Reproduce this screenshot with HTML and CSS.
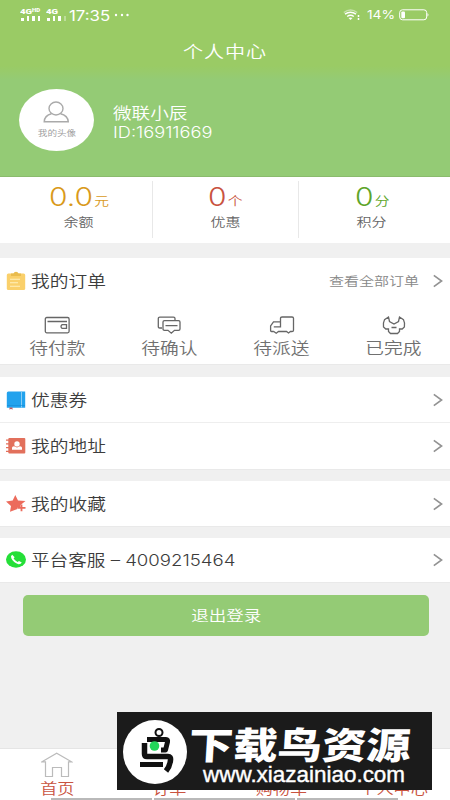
FILE: index.html
```html
<!DOCTYPE html>
<html lang="zh-CN">
<head>
<meta charset="utf-8">
<title>个人中心</title>
<link rel="stylesheet" href="styles.css">
</head>
<body>
<div class="screen">
  <header class="hero">
    <div class="status">
      <div class="signals">
        <div class="signal"><b>4G<sup>HD</sup></b><div class="bars"><i></i><i></i><i></i><i></i></div></div>
        <div class="signal"><b>4G</b><div class="bars"><i></i><i></i><i></i><i class="dim"></i></div></div>
      </div>
      <span class="clock wide">17:35</span>
      <svg class="dots" width="16" height="4" viewBox="0 0 16 4"><g fill="#fff"><circle cx="2" cy="2" r="1.2"/><circle cx="8" cy="2" r="1.2"/><circle cx="13.500" cy="2" r="1.2"/></g></svg>
      <svg class="wifi" width="18" height="12" viewBox="0 0 18 12" fill="none" stroke="#fff" stroke-width="1.5"><path d="M.8 3.500Q7.500-1.500 14.200 3.500" stroke-opacity=".45"/><path d="M2 5.200Q7.500 1.200 13 5.200M4.200 7.500Q7.500 5 10.800 7.500"/><path d="M5.500 9Q7.500 7.800 9.500 9L7.500 11z" fill="#fff" stroke="none"/><path d="M15.500 6v2M15.500 9v2" stroke-width="1.500"/></svg>
      <span class="percent wide">14%</span>
      <svg class="battery" width="31" height="12" viewBox="0 0 31 12"><rect x=".7" y=".8" width="27" height="10" rx="2.800" fill="none" stroke="#fff"/><rect x="2.300" y="2.400" width="3.700" height="6.800" rx="1" fill="#fff"/><path d="M28.500 4q2 1.800 0 3.600z" fill="#fff"/></svg>
    </div>
    <h1><span class="wide center">个人中心</span></h1>
    <div class="profile">
      <div class="avatar">
        <svg width="27" height="22" viewBox="0 0 27 22" fill="none" stroke="#aaa" stroke-width="1.400"><ellipse cx="13" cy="7.500" rx="7" ry="6.500"/><path d="M8.500 12.800Q1.500 14.500 1.200 20.800H25.300Q24.800 14.500 17.500 12.800"/></svg>
        <span class="wide center">我的头像</span>
      </div>
      <div class="who"><span class="wide name">微联小辰</span><span class="wide uid">ID:16911669</span></div>
    </div>
  </header>

  <section class="stats">
    <div class="stat gold"><div class="value"><span class="wide center"><b>0.0</b>元</span></div><div class="label"><span class="wide center">余额</span></div></div>
    <div class="stat red"><div class="value"><span class="wide center"><b>0</b>个</span></div><div class="label"><span class="wide center">优惠</span></div></div>
    <div class="stat green"><div class="value"><span class="wide center"><b>0</b>分</span></div><div class="label"><span class="wide center">积分</span></div></div>
  </section>

  <section class="card orders">
    <div class="row">
      <svg class="icon" width="20" height="20" viewBox="0 0 20 20"><rect x=".8" y="2.500" width="18.400" height="16.500" rx="1.500" fill="#fad06b"/><path d="M5 5V2.500H7.500Q8 .8 10 .8T12.500 2.500H15V5z" fill="#e9bc4e"/><path d="M4 8.300H14M4 11.800H12M4 15.200H14" stroke="#fff0bd" stroke-width="1.100"/></svg>
      <span class="wide">我的订单</span>
      <span class="more"><span class="wide">查看全部订单</span></span>
      <svg class="chev" width="10" height="14" viewBox="0 0 10 14"><path d="M.8 1.300 8.600 7 .8 12.700"/></svg>
    </div>
    <div class="steps">
      <div class="step"><svg width="28" height="20" viewBox="0 0 28 20"><rect x="2.300" y="2.500" width="23.800" height="15.300" rx="1.500"/><path d="M4.500 6.500H24M19 9.700h4.500v3.600H19q-2-1.800 0-3.600z"/></svg><span class="wide center">待付款</span></div>
      <div class="step"><svg width="28" height="20" viewBox="0 0 28 20"><path d="M7 13H4.800Q3.300 13 3.300 11.700V3.500Q3.300 2.200 4.800 2.200H18.500Q20 2.200 20 3.500V5.500M9.500 5.700H23.500Q25 5.700 25 7V14Q25 15.300 23.500 15.300H19.500L16.300 18.200 13 15.300H9.500Q8 15.300 8 14V7Q8 5.700 9.500 5.700zM10.500 10.700H22.500"/></svg><span class="wide center">待确认</span></div>
      <div class="step"><svg width="28" height="20" viewBox="0 0 28 20"><path d="M5.800 16.500H3.500Q2.600 16.500 2.600 15.500V11L5.500 6.800H12.500M5.800 11.800H12.500V3.300Q12.500 2 14 2H24Q25.500 2 25.500 3.300V15.200Q25.500 16.500 24 16.500H22.500L20.500 18 18.500 16.500H10.500L8.200 18.200 5.800 16.500"/></svg><span class="wide center">待派送</span></div>
      <div class="step"><svg width="28" height="20" viewBox="0 0 28 20"><path d="M8.500 2 4.500 4.700Q2.800 8 3.500 12L5.800 14H8.500V16.500L10.500 18.500H17.500L19.500 16.500V14H22.200L24.400 12Q25.200 8 23.500 4.700L19.500 2 18.500 6.500 14 9 9.500 6.500zM11.500 12.500H16.500"/></svg><span class="wide center">已完成</span></div>
    </div>
  </section>

  <section class="card">
    <div class="row">
      <svg class="icon" width="20" height="20" viewBox="0 0 20 20"><path d="M.8 3Q.8 1.500 2.300 1.500H19.200V17.700H.8z" fill="#22a2ed"/><path d="M15.500 1.500V17.700" stroke="#87cdf5"/><path d="M1 15.500H19" stroke="#168bd4" stroke-width=".6"/><path d="M3.500 17.500h3v2.200l-1.500-.9-1.500.9z" fill="#b45661"/></svg>
      <span class="wide">优惠券</span><svg class="chev" width="10" height="14" viewBox="0 0 10 14"><path d="M.8 1.300 8.600 7 .8 12.700"/></svg>
    </div>
    <div class="row ruled">
      <svg class="icon" width="20" height="20" viewBox="0 0 20 20"><rect x="2.300" y="2" width="17" height="15.500" rx="1" fill="#e2705c"/><path d="M0 4.200H4M0 7.900H4M0 11.600H4M0 15.300H4" stroke="#e2705c" stroke-width="1.300"/><circle cx="11" cy="7.900" r="2.700" fill="#fff"/><path d="M6 13.800V11.800Q6 10.300 8 10.300L11 11.500 14 10.300Q16 10.300 16 11.800V13.800z" fill="#fff"/></svg>
      <span class="wide">我的地址</span><svg class="chev" width="10" height="14" viewBox="0 0 10 14"><path d="M.8 1.300 8.600 7 .8 12.700"/></svg>
    </div>
  </section>

  <section class="card favorites">
    <div class="row">
      <svg class="icon" width="20" height="20" viewBox="0 0 20 20"><path d="M9.300 1 12 6.500 19.500 7 14.500 11V13L11.500 13.700V15L4 17.700 5 12 0 7.500 6.700 6.500z" fill="#ec6b5c"/><path d="M15.500 10.500V17.300M11.800 13.800H19.500" stroke="#ec6b5c" stroke-width="1.800"/></svg>
      <span class="wide">我的收藏</span><svg class="chev" width="10" height="14" viewBox="0 0 10 14"><path d="M.8 1.300 8.600 7 .8 12.700"/></svg>
    </div>
  </section>

  <section class="card service">
    <div class="row">
      <svg class="icon" width="20" height="20" viewBox="0 0 20 20"><ellipse cx="10" cy="9.500" rx="10" ry="8.300" fill="#25df38"/><path d="M6.200 4.700Q4.200 6 5.300 8.300 7.500 13 12.500 14.200 14.700 14.500 15.800 12.500L13 10.900 11.500 11.900Q8.600 10.800 7.600 8.300L8.700 7.200z" fill="#fff"/></svg>
      <span class="wide phone">平台客服 – 4009215464</span><svg class="chev" width="10" height="14" viewBox="0 0 10 14"><path d="M.8 1.300 8.600 7 .8 12.700"/></svg>
    </div>
  </section>

  <button class="logout"><span class="wide center">退出登录</span></button>

  <nav class="tabs">
    <div class="tab"><svg width="32" height="26" viewBox="0 0 32 26" fill="none" stroke="#bbb" stroke-width="1.200"><path d="M1 9.800 15.700 1.200 30.500 9.800H27.500V24.500H20.500V15.500H11.500V24.500H4.500V9.800z"/></svg><span class="wide center">首页</span></div>
    <div class="tab"><span class="wide center">订单</span></div>
    <div class="tab"><span class="wide center">购物车</span></div>
    <div class="tab"><span class="wide center">个人中心</span></div>
  </nav>
  <div class="gesture"><i></i><i></i><i></i></div>

  <div class="brand">
    <svg width="66" height="66" viewBox="0 0 66 66"><circle cx="33" cy="33" r="32" fill="#fff"/><g fill="none" stroke="#111" stroke-linejoin="round"><ellipse cx="37" cy="13.500" rx="3.500" ry="3.500" stroke-width="2"/><path d="M25 20.500H44Q46 20.500 45.500 23L43.500 31H39" stroke-width="5"/><path d="M22.500 24V35Q22.500 37.500 25 37.500H46Q49 37.500 48.500 41Q48 47 44 52" stroke-width="5.500"/><path d="M18 45.500H41" stroke-width="5"/></g><circle cx="32.500" cy="27" r="4.800" fill="#23d65a"/></svg>
    <div class="words"><strong>下载鸟资源</strong><span>www.xiazainiao.com</span></div>
  </div>
</div>
</body>
</html>
```
FILE: styles.css
```css
* { box-sizing: border-box; }
body { margin: 0; font-family: Inter, "Noto Sans CJK SC", sans-serif; font-weight: 350; color: #3c3c3c; }
svg { display: block; flex: none; }
.screen { position: relative; width: 450px; height: 800px; overflow: hidden; background: #f0f0f0; display: flex; flex-direction: column; }
.screen > * { flex: none; }
.wide { display: inline-block; white-space: nowrap; transform: scaleX(1.2); transform-origin: left center; }
.wide.center { transform-origin: center; }

.hero { height: 177px; border-bottom: 1px solid #8abb6d; background: linear-gradient(#9acb65 0, #9acb65 66px, #94cb75 80px, #94cb75 100%); color: #fff; }
.status { height: 30px; padding: 0 20px; display: flex; align-items: center; }
.signals { display: flex; gap: 4px; width: 50px; height: 13px; margin-top: -2px; }
.signal b { display: block; font: 900 8px/7px Roboto, sans-serif; white-space: nowrap; transform: scaleX(1.2); transform-origin: left; }
.signal sup { font-size: 5px; line-height: 1px; vertical-align: 2px; }
.signal:first-child { width: 22px; }
.bars { display: flex; align-items: flex-end; gap: 3px; height: 5px; margin: 1px 0 0 1px; }
.bars i { width: 2.500px; height: 5px; background: #fff; }
.bars i:first-child { height: 3px; }
.bars .dim { opacity: .35; }
.clock { width: 45px; font-size: 14px; font-weight: 400; }
.dots { margin-left: 0; }
.wifi { margin-left: 213px; }
.percent { width: 33px; margin-left: 6px; font-size: 11.500px; font-weight: 400; }
.battery { flex: none; }
h1 { margin: 9px 0 0; height: 26px; font-size: 16.700px; line-height: 26px; font-weight: 350; text-align: center; letter-spacing: .8px; }
.profile { display: flex; margin: 24px 0 0 19px; }
.avatar { width: 75px; height: 62px; border-radius: 50%; background: #fff; color: #999; padding-top: 12px; display: flex; flex-direction: column; align-items: center; font-size: 8px; line-height: 18px; }
.avatar span { margin-top: 1px; }
.who { display: flex; flex-direction: column; align-items: flex-start; margin: 15px 0 0 19px; font-size: 15.500px; line-height: 20px; }
.uid { font-size: 15.200px; line-height: 18px; }

.stats { height: 66px; background: #fff; display: grid; grid-template-columns: 152px 146px 152px; padding: 4px 0 5px; }
.stat { text-align: center; padding-left: 5px; }
.stat + .stat { border-left: 1px solid #e8e8e8; padding-left: 0; }
.stat.green { padding-right: 5px; }
.value { height: 32px; line-height: 32px; font-size: 12.300px; }
.value b { font-size: 25px; font-weight: 350; margin-right: 1px; }
.label { font-size: 12.500px; line-height: 20px; color: #666; }
.gold .value { color: #d99a1b; }
.red .value { color: #c95340; }
.green .value { color: #5ea52a; }

.card { background: #fff; margin-top: 12px; border-bottom: 1px solid #e9e9e9; }
.card.orders { margin-top: 15px; height: 107px; }
.card.favorites { margin-top: 11px; }
.card.service { margin-top: 11px; }
.row { height: 45px; padding: 0 7px 0 6px; display: flex; align-items: center; font-size: 15.600px; }
.row > .wide { margin-left: 5px; margin-top: -2px; }
.row.ruled { height: 47px; border-top: 1px solid #eee; }
.row > .phone { font-size: 15.500px; }
.chev { margin-left: auto; fill: none; stroke: #929292; stroke-width: 1.600; }
.more { margin-left: auto; color: #888; font-size: 12.500px; width: 90px; }
.more + .chev { margin-left: 14px; }
.steps { display: grid; grid-template-columns: repeat(4, 1fr); padding: 12px 0 0 1px; }
.step { display: flex; flex-direction: column; align-items: center; font-size: 15.600px; line-height: 24px; color: #707070; }
.step svg { fill: none; stroke: #666; stroke-width: 1.300; margin-bottom: 2px; }

.card.service .row { height: 44px; }
.logout { display: block; width: 406px; height: 41px; margin: 12px 0 0 23px; padding: 0 0 3px; border: 0; border-radius: 5px; background: #94cb75; color: #fff; font: inherit; font-size: 14.600px; }
.tabs { margin-top: auto; height: 52px; background: #fff; border-top: 1px solid #e5e5e5; display: grid; grid-template-columns: repeat(4, 1fr); color: #c95340; font-size: 14.300px; line-height: 22px; padding-left: 1px; }
.tab { display: flex; flex-direction: column; align-items: center; justify-content: flex-end; }
.gesture { position: absolute; bottom: 0; left: 51px; display: flex; gap: 2px; }
.gesture i { width: 101px; height: 2px; background: #b9b9b9; }
.gesture i:nth-child(2) { width: 141px; }

.brand { position: absolute; left: 117px; top: 712px; width: 315px; height: 78px; background: #1b1b1b; color: #fff; padding: 7px 0 0 5px; display: flex; }
.words { width: 240px; }
.words strong { display: block; width: 185px; margin: 3px 0 0 1px; font: 900 37px/43px "Noto Sans CJK SC", sans-serif; white-space: nowrap; transform: scaleX(1.2) skewX(-3deg); transform-origin: left; }
.words span { display: block; margin: -1px 0 0 15px; font: 400 22px/22px "Liberation Sans", sans-serif; white-space: nowrap; transform: scaleX(1.02); transform-origin: left; width: 198px; -webkit-text-stroke: .4px #fff; }
```
